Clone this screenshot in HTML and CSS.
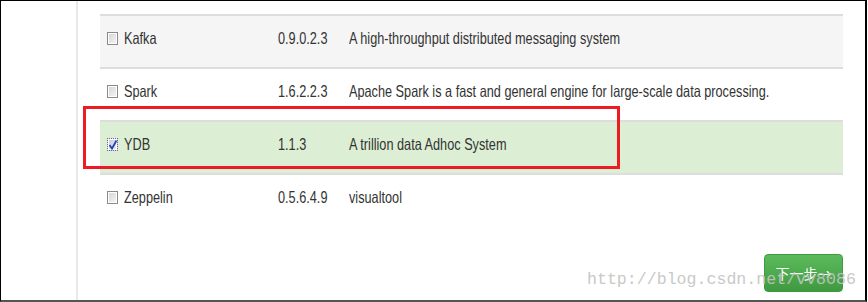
FILE: index.html
```html
<!DOCTYPE html>
<html lang="zh-CN">
<head>
    <meta charset="UTF-8">
    <title>选择服务</title>
    <link rel="stylesheet" href="styles.css">
</head>
<body>
    <div class="frame">
        <div class="side"></div>
        <div class="main">
            <div class="services">
                <div class="row odd">
                    <div class="cell name"><span class="check"></span><span class="txt">Kafka</span></div>
                    <div class="cell"><span class="txt">0.9.0.2.3</span></div>
                    <div class="cell"><span class="txt">A high-throughput distributed messaging system</span></div>
                </div>
                <div class="row">
                    <div class="cell name"><span class="check"></span><span class="txt">Spark</span></div>
                    <div class="cell"><span class="txt">1.6.2.2.3</span></div>
                    <div class="cell"><span class="txt">Apache Spark is a fast and general engine for large-scale data processing.</span></div>
                </div>
                <div class="row success">
                    <div class="cell name">
                        <span class="check checked">
                            <svg width="12" height="13" viewBox="0 0 12 13"><path d="M2.5 7 L5 10.5 L9.5 2.5" fill="none" stroke="#2242b8" stroke-width="1.8"/></svg>
                        </span><span class="txt">YDB</span>
                    </div>
                    <div class="cell"><span class="txt">1.1.3</span></div>
                    <div class="cell"><span class="txt">A trillion data Adhoc System</span></div>
                </div>
                <div class="row last">
                    <div class="cell name"><span class="check"></span><span class="txt">Zeppelin</span></div>
                    <div class="cell"><span class="txt">0.5.6.4.9</span></div>
                    <div class="cell"><span class="txt">visualtool</span></div>
                </div>
            </div>
            <div class="actions">
                <button class="next">下一步→</button>
            </div>
        </div>
        <div class="mark"></div>
        <div class="watermark">http://blog.csdn.net/vv8086</div>
    </div>
</body>
</html>
```

FILE: styles.css
```css
body {
    margin: 0;
    background: #ffffff;
}
.frame {
    position: relative;
    display: flex;
    width: 867px;
    height: 302px;
    box-sizing: border-box;
    border-top: 1px solid #000000;
    border-left: 1px solid #000000;
    border-right: 2px solid #000000;
    border-bottom: 2px solid #555555;
    overflow: hidden;
}
.side {
    width: 75px;
    flex: 0 0 75px;
    border-right: 2px solid #e8e8e8;
}
.main {
    flex: 1;
    min-width: 0;
    padding: 13px 22px 0 22px;
}
.services {
    font-family: "Liberation Sans", Arial, sans-serif;
    font-size: 16.5px;
    color: #333333;
}
.row {
    display: grid;
    grid-template-columns: 170px 71px minmax(0, 1fr);
    height: 51px;
    border-top: 2px solid #dddddd;
}
.row.odd {
    background: #f5f5f5;
}
.row.success {
    background: #dcefd4;
}
.row.last {
    height: 53px;
}
.cell {
    min-width: 0;
    padding: 12px 0 0 8px;
    line-height: 20px;
    white-space: nowrap;
}
.cell.name {
    display: flex;
    align-items: flex-start;
    padding-left: 7px;
}
.txt {
    display: inline-block;
    transform: scaleX(0.77);
    transform-origin: left center;
}
.check {
    flex: 0 0 auto;
    display: inline-block;
    width: 9px;
    height: 11px;
    margin: 4px 6px 0 0;
    border: 1px solid #8a8a8a;
    background: linear-gradient(135deg, #d4d4d4, #f6f6f6);
    box-shadow: inset 0 0 0 1px #ffffff;
}
.check.checked {
    position: relative;
    border: 1px dotted #6a6a8a;
    background: linear-gradient(135deg, #c8c8d8, #eeeef4);
}
.check svg {
    position: absolute;
    left: -1px;
    top: -1px;
}
.actions {
    display: flex;
    justify-content: flex-end;
    margin-top: 26px;
}
.next {
    width: 79px;
    height: 38px;
    border: 1px solid #3f9a3f;
    border-radius: 4px;
    background: linear-gradient(#5cba5c, #3f9a3f);
    color: #ffffff;
    font-family: "Noto Sans CJK SC", sans-serif;
    font-size: 14px;
    padding: 0;
    cursor: pointer;
}
.mark {
    position: absolute;
    left: 82px;
    top: 105px;
    width: 531px;
    height: 57px;
    border: 3px solid #ed1c24;
}
.watermark {
    position: absolute;
    left: 586px;
    top: 269px;
    font-family: "Liberation Mono", monospace;
    font-size: 16.6px;
    color: #c4c4c4;
    opacity: 0.9;
    white-space: nowrap;
}
```
